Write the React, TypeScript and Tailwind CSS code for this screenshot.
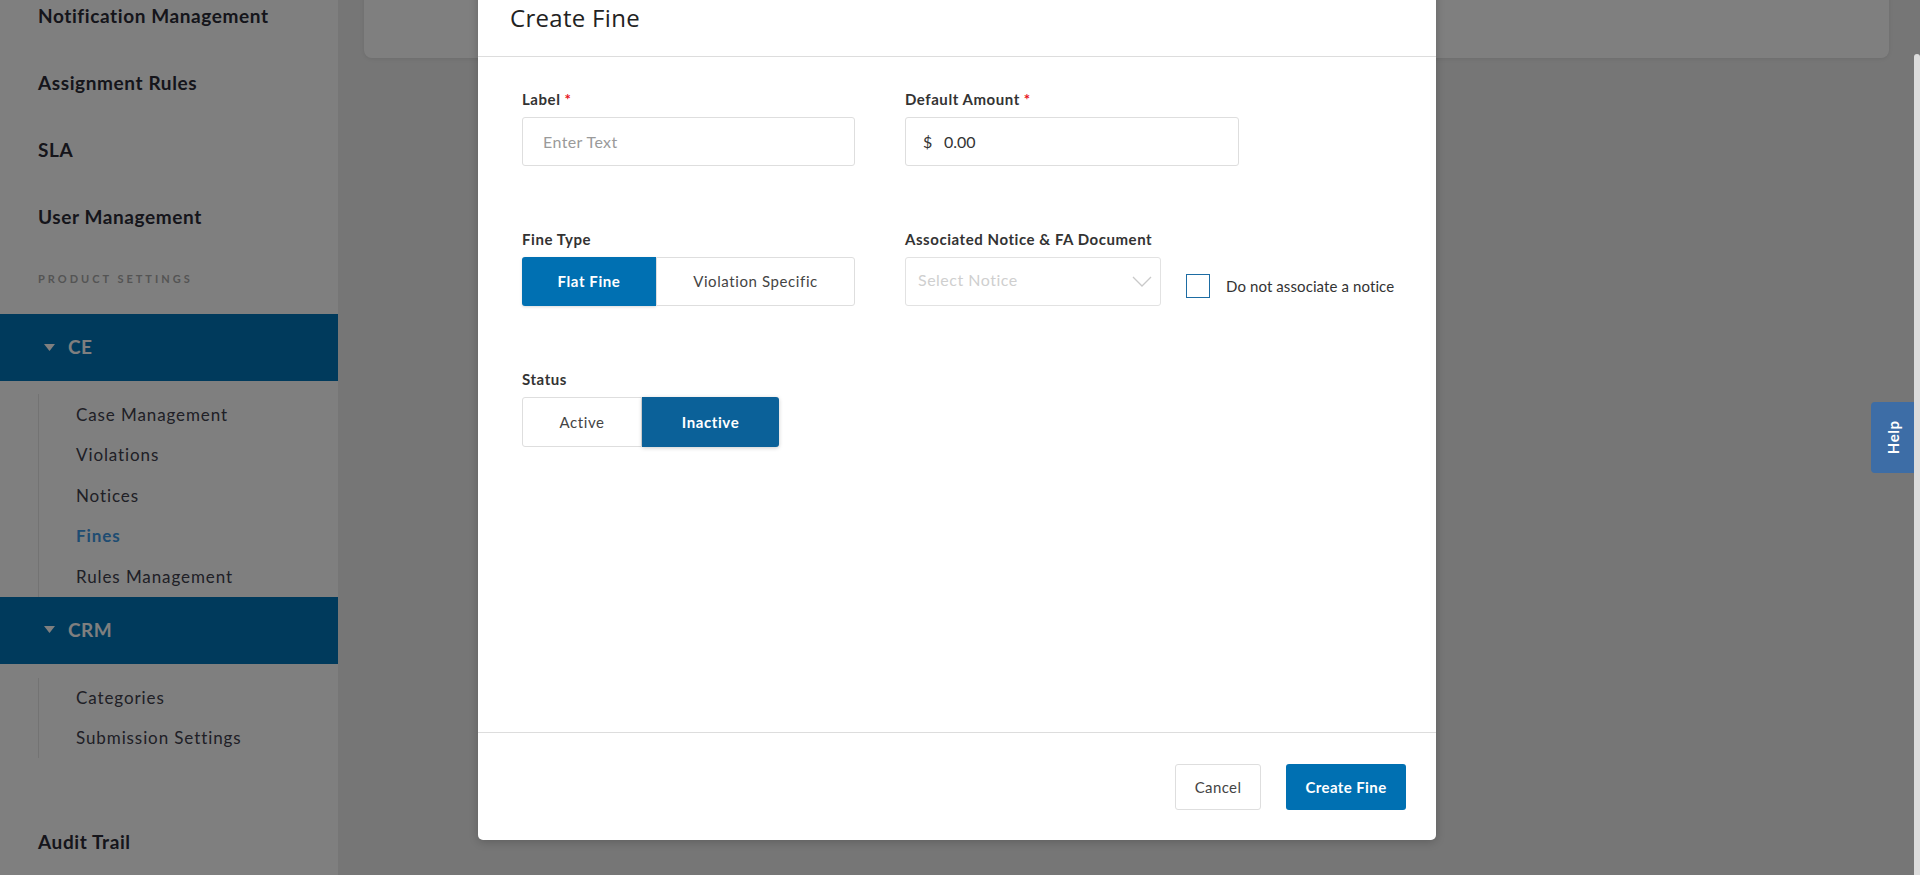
import React from 'react';

const topLinks = ['Notification Management', 'Assignment Rules', 'SLA', 'User Management'];

function Caret() {
  return (
    <svg width="11" height="8" viewBox="0 0 11 8" className="mr-[13px]">
      <polygon points="0,0 11,0 5.5,7" fill="#ffffff" />
    </svg>
  );
}

function Sidebar() {
  return (
    <aside className="w-[338px] shrink-0 bg-white h-full overflow-hidden">
      <div className="-mt-[17px]">
        {topLinks.map((l) => (
          <div key={l} className="h-[67px] flex items-center pl-[38px] text-[19px] font-bold tracking-[0.6px] text-[#2b2b36]">
            {l}
          </div>
        ))}
        <div className="h-[63px] pt-[21px] pl-[38px] text-[11px] leading-[14px] font-bold tracking-[3px] text-[#a9a9a9]">
          PRODUCT SETTINGS
        </div>

        <div className="h-[67px] bg-[#0074b8] flex items-center pl-[44px] text-[19px] font-bold tracking-[0.5px] text-white">
          <Caret />
          CE
        </div>
        <div className="pt-[13px]">
          <div className="ml-[38px] border-l border-[#e6e6e6]">
            {['Case Management', 'Violations', 'Notices', 'Fines', 'Rules Management'].map((s) => (
              <div
                key={s}
                className={
                  'h-[40.5px] flex items-center pl-[37px] text-[17px] tracking-[0.9px] ' +
                  (s === 'Fines' ? 'text-[#3d98e4] font-bold' : 'text-[#40404c]')
                }
              >
                {s}
              </div>
            ))}
          </div>
        </div>

        <div className="h-[67px] bg-[#0074b8] flex items-center pl-[44px] text-[19px] font-bold tracking-[0.5px] text-white">
          <Caret />
          CRM
        </div>
        <div className="pt-[14px]">
          <div className="ml-[38px] border-l border-[#e6e6e6]">
            {['Categories', 'Submission Settings'].map((s) => (
              <div key={s} className="h-[40px] flex items-center pl-[37px] text-[17px] tracking-[0.9px] text-[#40404c]">
                {s}
              </div>
            ))}
          </div>
        </div>

        <div className="mt-[51px] h-[67px] flex items-center pl-[38px] text-[19px] font-bold tracking-[0.6px] text-[#2b2b36]">
          Audit Trail
        </div>
      </div>
    </aside>
  );
}

function FieldLabel({ text, required }: { text: string; required?: boolean }) {
  return (
    <div className="h-[20px] mb-[8px] flex items-center text-[15px] font-bold tracking-[0.55px] text-[#333]">
      {text}
      {required && <span className="ml-[4px] text-[#e8121b]">*</span>}
    </div>
  );
}

function Segmented({ options, active, widths }: { options: string[]; active: number; widths: string[] }) {
  return (
    <div className="flex h-[49px]">
      {options.map((o, i) => (
        <div
          key={o}
          className={
            widths[i] +
            ' flex items-center justify-center text-[15px] tracking-[0.6px] ' +
            (i === 0 ? 'rounded-l-[3px] ' : 'rounded-r-[3px] ') +
            (i === active
              ? 'bg-[#0070b2] text-white font-bold shadow-[0_1px_3px_rgba(0,0,0,0.15)]'
              : 'bg-white border border-[#dedede] text-[#444]')
          }
        >
          {o}
        </div>
      ))}
    </div>
  );
}

function CreateFineModal() {
  return (
    <div className="w-[958px] -mt-[22px] self-start bg-white rounded-[5px] shadow-[0_2px_10px_rgba(0,0,0,0.2)] flex flex-col">
      <div className="h-[79px] flex items-center pl-[32px] pt-[2px] border-b border-[#dddddd]">
        <h2 className="font-['Open_Sans',sans-serif] text-[24px] font-medium text-[#222] tracking-[0.3px]">Create Fine</h2>
      </div>

      <div className="h-[675px] pt-[32px] pl-[44px]">
        <div className="grid grid-cols-[333px_1fr] gap-x-[50px]">
          <div>
            <FieldLabel text="Label" required />
            <div className="h-[49px] w-[333px] border border-[#dedede] rounded-[3px] flex items-center pl-[20px] text-[16px] tracking-[0.4px] text-[#9a9a9a]">
              Enter Text
            </div>
          </div>
          <div>
            <FieldLabel text="Default Amount" required />
            <div className="h-[49px] w-[334px] border border-[#dedede] rounded-[3px] flex items-center pl-[17px] text-[16px] text-[#333]">
              <span className="w-[21px]">$</span>
              <span>0.00</span>
            </div>
          </div>

          <div className="mt-[63px]">
            <FieldLabel text="Fine Type" />
            <Segmented options={['Flat Fine', 'Violation Specific']} active={0} widths={['w-[134px]', 'w-[199px]']} />
          </div>
          <div className="mt-[63px]">
            <FieldLabel text="Associated Notice & FA Document" />
            <div className="flex items-start">
              <div className="h-[49px] w-[256px] border border-[#e2e2e2] rounded-[3px] flex items-center justify-between pl-[12px] pr-[8px] text-[16px] tracking-[0.5px] text-[#cfcfcf]">
                <span className="pb-[4px]">Select Notice</span>
                <svg width="20" height="11" viewBox="0 0 20 11">
                  <polyline points="1,1 10,10 19,1" fill="none" stroke="#c9c9c9" strokeWidth="1.3" />
                </svg>
              </div>
              <div className="ml-[25px] mt-[17px] flex items-center">
                <span className="w-[24px] h-[24px] border-[1.5px] border-[#1d6ca3] bg-white" />
                <span className="ml-[16px] text-[15px] text-[#333] tracking-[0.1px]">Do not associate a notice</span>
              </div>
            </div>
          </div>

          <div className="mt-[63px] col-span-2">
            <FieldLabel text="Status" />
            <div className="flex h-[50px]">
              <div className="w-[120px] flex items-center justify-center rounded-l-[3px] bg-white border border-[#dedede] text-[15px] text-[#444] tracking-[0.6px]">
                Active
              </div>
              <div className="w-[137px] flex items-center justify-center rounded-r-[3px] bg-[#0b6199] text-white text-[15px] font-bold tracking-[0.6px] shadow-[0_1px_4px_rgba(0,0,0,0.2)]">
                Inactive
              </div>
            </div>
          </div>
        </div>
      </div>

      <div className="border-t border-[#dddddd] pt-[31px] pb-[30px] pr-[30px] flex justify-end gap-[25px]">
        <button className="h-[46px] w-[86px] bg-white border border-[#dedede] rounded-[3px] text-[15px] text-[#444] tracking-[0.4px]">
          Cancel
        </button>
        <button className="h-[46px] w-[120px] bg-[#0070b2] rounded-[3px] text-[15px] font-bold text-white tracking-[0.4px]">
          Create Fine
        </button>
      </div>
    </div>
  );
}

export default function App() {
  return (
    <div className="relative w-[1920px] h-[875px] overflow-hidden font-[Lato,sans-serif]">
      <div className="flex h-full">
        <Sidebar />
        <main className="flex-1 bg-[#ececec] pl-[26px] pr-[31px]">
          <div className="h-[90px] -mt-[32px] bg-white rounded-lg shadow-[0_1px_4px_rgba(0,0,0,0.08)]" />
        </main>
      </div>

      <div className="absolute inset-0 bg-black/50 flex">
        <div className="flex-1 flex justify-center overflow-hidden">
          <CreateFineModal />
        </div>
        <div className="w-[6px] pt-[54px]">
          <div className="h-full bg-[#dcdcdc] rounded-t-[3px]" />
        </div>
      </div>

      <div className="absolute right-[6px] top-[402px] w-[43px] h-[71px] bg-[#3d6da6] rounded-l-[4px] flex items-center justify-center">
        <span className="-rotate-90 text-white text-[15px] font-bold tracking-[0.6px]">Help</span>
      </div>
    </div>
  );
}
